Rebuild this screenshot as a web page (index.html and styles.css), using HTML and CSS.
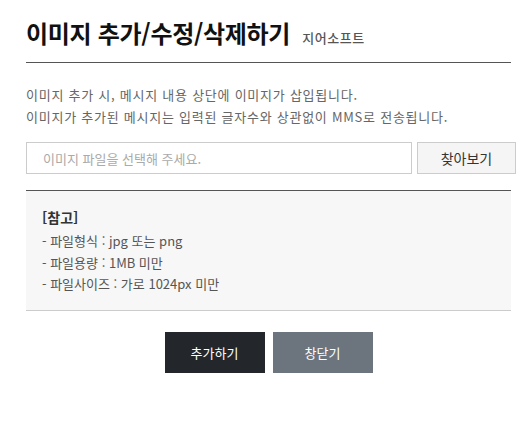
FILE: index.html
```html
<!DOCTYPE html>
<html lang="ko">
<head>
<meta charset="utf-8">
<title>이미지 추가/수정/삭제하기</title>
<link rel="stylesheet" href="styles.css">
</head>
<body>
<div class="page">
  <header class="header">
    <h1 class="title">이미지 추가/수정/삭제하기</h1>
    <span class="brand">지어소프트</span>
  </header>
  <p class="desc">이미지 추가 시, 메시지 내용 상단에 이미지가 삽입됩니다.<br>이미지가 추가된 메시지는 입력된 글자수와 상관없이 MMS로 전송됩니다.</p>
  <div class="file-row">
    <input class="file-input" type="text" placeholder="이미지 파일을 선택해 주세요." readonly>
    <button class="find-btn" type="button">찾아보기</button>
  </div>
  <div class="note">
    <div class="note-title">[참고]</div>
    <ul class="note-list">
      <li>- 파일형식 : jpg 또는 png</li>
      <li>- 파일용량 : 1MB 미만</li>
      <li>- 파일사이즈 : 가로 1024px 미만</li>
    </ul>
  </div>
  <div class="actions">
    <button class="btn btn-dark" type="button">추가하기</button>
    <button class="btn btn-gray" type="button">창닫기</button>
  </div>
</div>
</body>
</html>
```
FILE: styles.css
```css
* { box-sizing: border-box; }
body {
  margin: 0;
  background: #fff;
  font-family: "Noto Sans CJK KR", "Noto Sans", sans-serif;
  color: #333;
}
.page {
  width: 485px;
  margin-left: 26px;
  padding-top: 16px;
}
.header {
  display: flex;
  align-items: baseline;
  gap: 12px;
  padding-bottom: 13px;
  border-bottom: 1px solid #555;
}
.title {
  margin: 0;
  font-size: 24px;
  line-height: 33px;
  font-weight: 700;
  color: #111;
  letter-spacing: -0.3px;
}
.brand {
  font-size: 13px;
  letter-spacing: 0.6px;
  color: #555;
  font-weight: 500;
}
.desc {
  margin: 21px 0 0;
  font-size: 13px;
  line-height: 22px;
  letter-spacing: 0.75px;
  color: #666;
}
.file-row {
  display: flex;
  gap: 5px;
  width: 490px;
  margin-top: 14px;
}
.file-input {
  width: 386px;
  height: 32px;
  border: 1px solid #ccc;
  padding: 0 16px;
  font-family: inherit;
  font-size: 13px;
  color: #333;
  outline: none;
}
.file-input::placeholder { color: #aaa; }
.find-btn {
  width: 99px;
  height: 32px;
  border: 1px solid #ccc;
  background: #f5f5f5;
  font-family: inherit;
  font-size: 14px;
  color: #333;
}
.note {
  margin-top: 16px;
  background: #f7f7f7;
  border-top: 1px solid #555;
  border-bottom: 1px solid #ccc;
  padding: 15px 16px 15px;
}
.note-title {
  font-size: 14px;
  font-weight: 700;
  line-height: 22px;
  color: #333;
}
.note-list {
  list-style: none;
  margin: 2px 0 0;
  padding: 0;
  font-size: 13px;
  letter-spacing: 0;
  line-height: 21.5px;
  color: #555;
}
.actions {
  display: flex;
  justify-content: center;
  gap: 8px;
  margin-top: 21px;
}
.btn {
  width: 100px;
  height: 41px;
  border: 0;
  font-family: inherit;
  font-size: 13px;
  color: #fff;
}
.btn-dark { background: #23272b; }
.btn-gray { background: #6c757d; }
```
